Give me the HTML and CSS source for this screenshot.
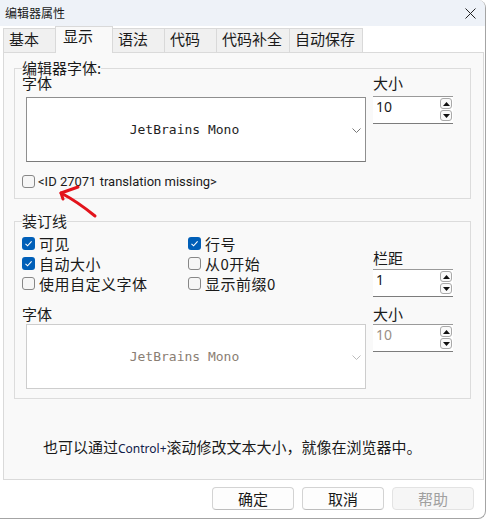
FILE: index.html
```html
<!DOCTYPE html>
<html lang="zh-CN">
<head>
  <meta charset="UTF-8">
  <title>编辑器属性</title>
  <link rel="stylesheet" href="styles.css">
</head>
<body>
  <div class="window">
    <div class="titlebar">
      <span class="title">编辑器属性</span>
      <svg class="close" width="11" height="11" viewBox="0 0 11 11"><path d="M0.5 0.5 L10.5 10.5 M10.5 0.5 L0.5 10.5" stroke="#222" stroke-width="1" fill="none"/></svg>
    </div>

    <div class="tabs">
      <div class="tab">基本</div>
      <div class="tab active">显示</div>
      <div class="tab">语法</div>
      <div class="tab">代码</div>
      <div class="tab">代码补全</div>
      <div class="tab">自动保存</div>
    </div>

    <div class="panel">
      <fieldset class="group">
        <legend>编辑器字体:</legend>
        <div class="group-row">
          <div class="font-col">
            <div class="label label-first">字体</div>
            <div class="font-box">
              <span class="font-name">JetBrains Mono</span>
              <svg class="chevron" width="9" height="6" viewBox="0 0 9 6"><path d="M0.5 0.5 L4.5 4.5 L8.5 0.5" stroke="#777" stroke-width="1" fill="none"/></svg>
            </div>
            <div class="check check-id">
              <span class="cb"></span>
              <span>&lt;ID 27071 translation missing&gt;</span>
            </div>
          </div>
          <div class="size-col">
            <div class="label label-first">大小</div>
            <div class="spin">
              <span class="spin-value">10</span>
              <div class="spin-btns">
                <div class="spin-btn"><svg width="7" height="4" viewBox="0 0 7 4"><path d="M0 4 L3.5 0 L7 4 Z" fill="#111"/></svg></div>
                <div class="spin-btn"><svg width="7" height="4" viewBox="0 0 7 4"><path d="M0 0 L7 0 L3.5 4 Z" fill="#111"/></svg></div>
              </div>
            </div>
          </div>
        </div>
      </fieldset>

      <fieldset class="group group-gutter">
        <legend>装订线</legend>
        <div class="group-row">
          <div class="font-col">
            <div class="checks">
              <div class="check"><span class="cb on"><svg width="13" height="13" viewBox="0 0 13 13"><path d="M3.5 6.8 L5.6 8.8 L9.6 4.4" stroke="#fff" stroke-width="1.1" fill="none"/></svg></span><span>可见</span></div>
              <div class="check"><span class="cb on"><svg width="13" height="13" viewBox="0 0 13 13"><path d="M3.5 6.8 L5.6 8.8 L9.6 4.4" stroke="#fff" stroke-width="1.1" fill="none"/></svg></span><span>行号</span></div>
              <div class="check"><span class="cb on"><svg width="13" height="13" viewBox="0 0 13 13"><path d="M3.5 6.8 L5.6 8.8 L9.6 4.4" stroke="#fff" stroke-width="1.1" fill="none"/></svg></span><span>自动大小</span></div>
              <div class="check"><span class="cb"></span><span>从0开始</span></div>
              <div class="check"><span class="cb"></span><span>使用自定义字体</span></div>
              <div class="check"><span class="cb"></span><span>显示前缀0</span></div>
            </div>
            <div class="label label-gap">字体</div>
            <div class="font-box disabled">
              <span class="font-name">JetBrains Mono</span>
              <svg class="chevron" width="9" height="6" viewBox="0 0 9 6"><path d="M0.5 0.5 L4.5 4.5 L8.5 0.5" stroke="#bbb" stroke-width="1" fill="none"/></svg>
            </div>
          </div>
          <div class="size-col">
            <div class="label label-margin">栏距</div>
            <div class="spin spin-tight">
              <span class="spin-value">1</span>
              <div class="spin-btns">
                <div class="spin-btn"><svg width="7" height="4" viewBox="0 0 7 4"><path d="M0 4 L3.5 0 L7 4 Z" fill="#111"/></svg></div>
                <div class="spin-btn"><svg width="7" height="4" viewBox="0 0 7 4"><path d="M0 0 L7 0 L3.5 4 Z" fill="#111"/></svg></div>
              </div>
            </div>
            <div class="label label-size2">大小</div>
            <div class="spin spin-tighter">
              <span class="spin-value muted">10</span>
              <div class="spin-btns">
                <div class="spin-btn"><svg width="7" height="4" viewBox="0 0 7 4"><path d="M0 4 L3.5 0 L7 4 Z" fill="#111"/></svg></div>
                <div class="spin-btn"><svg width="7" height="4" viewBox="0 0 7 4"><path d="M0 0 L7 0 L3.5 4 Z" fill="#111"/></svg></div>
              </div>
            </div>
          </div>
        </div>
      </fieldset>

      <div class="hint">也可以通过<span class="latin">Control+</span>滚动修改文本大小，就像在浏览器中。</div>
    </div>

    <div class="footer">
      <button class="btn">确定</button>
      <button class="btn">取消</button>
      <button class="btn disabled">帮助</button>
    </div>

    <!-- red annotation arrow drawn over the dialog -->
    <svg class="arrow" width="45" height="40" viewBox="0 0 45 40">
      <path d="M22 5 L5 11 L7 17" stroke="#e3141c" stroke-width="3" fill="none" stroke-linecap="round" stroke-linejoin="round"/>
      <path d="M5 11 Q22 20 39 34" stroke="#e3141c" stroke-width="3" fill="none" stroke-linecap="round"/>
    </svg>
  </div>
</body>
</html>
```

FILE: styles.css
```css
* {
  box-sizing: border-box;
}
body {
  margin: 0;
  background: #fff;
  font-family: "Noto Sans CJK SC", sans-serif;
  font-size: 15px;
  color: #1a1a1a;
}
.window {
  width: 486px;
  height: 519px;
  position: relative;
  overflow: hidden;
  background: #fff;
  border-right: 1px solid #a4a4a4;
  border-bottom: 1px solid #a4a4a4;
  border-radius: 0 8px 8px 0;
}
.titlebar {
  height: 26px;
  display: flex;
  align-items: center;
  justify-content: space-between;
  padding: 0 9px 0 5px;
  background: #eef2f8;
}
.title {
  font-size: 12px;
  line-height: 14px;
}
.tabs {
  display: flex;
  align-items: flex-end;
  height: 26px;
  margin: 0 1px 0 3px;
}
.tab {
  height: 24px;
  min-width: 53px;
  margin-right: -1px;
  padding: 0 7px 0 5px;
  border: 1px solid #d9d9d9;
  border-bottom: none;
  background: #f0f0f0;
  line-height: 20px;
  white-space: nowrap;
}
.tab.active {
  height: 27px;
  min-width: 58px;
  margin-bottom: -1px;
  padding: 0 7px;
  background: #f9f9f9;
  position: relative;
  z-index: 1;
  line-height: 18px;
}
.panel {
  height: 428px;
  margin: 0 1px 0 3px;
  padding: 0 12px 0 10px;
  border: 1px solid #dadada;
  background: #f9f9f9;
  display: flex;
  flex-direction: column;
}
.group {
  margin: 8px 0 0 0;
  padding: 0 0 9px 7px;
  border: 1px solid #dcdcdc;
  min-width: 0;
}
.group legend {
  padding: 0;
  line-height: 14px;
  font-size: 15px;
}
.group-gutter {
  margin-top: 15px;
}
.group-row {
  display: flex;
}
.font-col {
  width: 351px;
}
.size-col {
  width: 80px;
}
.label {
  line-height: 14px;
  white-space: nowrap;
}
.label-first {
  margin-top: 1px;
}
.label-gap {
  margin-top: 14px;
}
.label-margin {
  margin-top: 23px;
}
.label-size2 {
  margin-top: 10px;
}
.font-box {
  margin: 7px 0 0 4px;
  width: 340px;
  height: 65px;
  border: 1px solid #8f8f8f;
  border-bottom-color: #7a7a7a;
  background: #fff;
  display: flex;
  align-items: center;
  font-family: "DejaVu Sans Mono", monospace;
  font-size: 13px;
  color: #1e1e1e;
}
.font-box.disabled {
  margin-top: 3px;
  border-color: #cdcdcd;
  color: #8a7e73;
}
.font-name {
  flex: 1;
  text-align: center;
}
.chevron {
  margin: 2px 4px 0 10px;
}
.check {
  display: flex;
  align-items: center;
  gap: 4px;
  height: 20px;
  white-space: nowrap;
  letter-spacing: 0.5px;
}
.check-id {
  margin-top: 11px;
  height: 16px;
  gap: 3px;
  letter-spacing: 0;
  font-family: Roboto, "Noto Sans", sans-serif;
  font-size: 13px;
}
.cb {
  width: 13px;
  height: 13px;
  flex: none;
  border: 1px solid #878787;
  border-radius: 3px;
  background: #f6f6f6;
  display: flex;
}
.cb.on {
  border: none;
  background: #005fb8;
}
.checks {
  padding-top: 5px;
  display: grid;
  grid-template-columns: 166px auto;
}
.spin {
  margin-top: 6px;
  height: 28px;
  border-top: 1px solid #9a9a9a;
  border-bottom: 1px solid #7c7c7c;
  background: #fff;
  display: flex;
  justify-content: space-between;
  padding: 0 1px 0 3px;
}
.spin-tight {
  margin-top: 4px;
}
.spin-tighter {
  margin-top: 3px;
}
.spin-value {
  font-family: "Noto Sans", sans-serif;
  font-size: 14px;
  line-height: 20px;
  color: #1a1a1a;
}
.spin-value.muted {
  color: #9a8f86;
}
.spin-btns {
  display: flex;
  flex-direction: column;
  gap: 1px;
  margin-top: 1px;
}
.spin-btn {
  width: 12px;
  height: 11px;
  border: 1px solid #a9a9a9;
  border-radius: 3px;
  background: #fafafa;
  display: flex;
  align-items: center;
  justify-content: center;
}
.hint {
  margin-top: 40px;
  padding-left: 29px;
  line-height: 16px;
  white-space: nowrap;
}
.latin {
  font-family: "Noto Sans", sans-serif;
  font-size: 12px;
  color: #10204a;
}
.footer {
  display: flex;
  justify-content: flex-end;
  gap: 8px;
  padding: 7px 11px 0 0;
}
.btn {
  width: 82px;
  height: 23px;
  padding: 0;
  border: 1px solid #d3d3d3;
  border-bottom-color: #bdbdbd;
  border-radius: 4px;
  background: #fdfdfd;
  font-family: "Noto Sans CJK SC", sans-serif;
  font-size: 15px;
  line-height: 20px;
  color: #1a1a1a;
}
.btn.disabled {
  border-color: #e3e3e3;
  background: #f6f6f6;
  color: #a0a0a0;
}
.arrow {
  position: absolute;
  left: 56px;
  top: 182px;
}
```
